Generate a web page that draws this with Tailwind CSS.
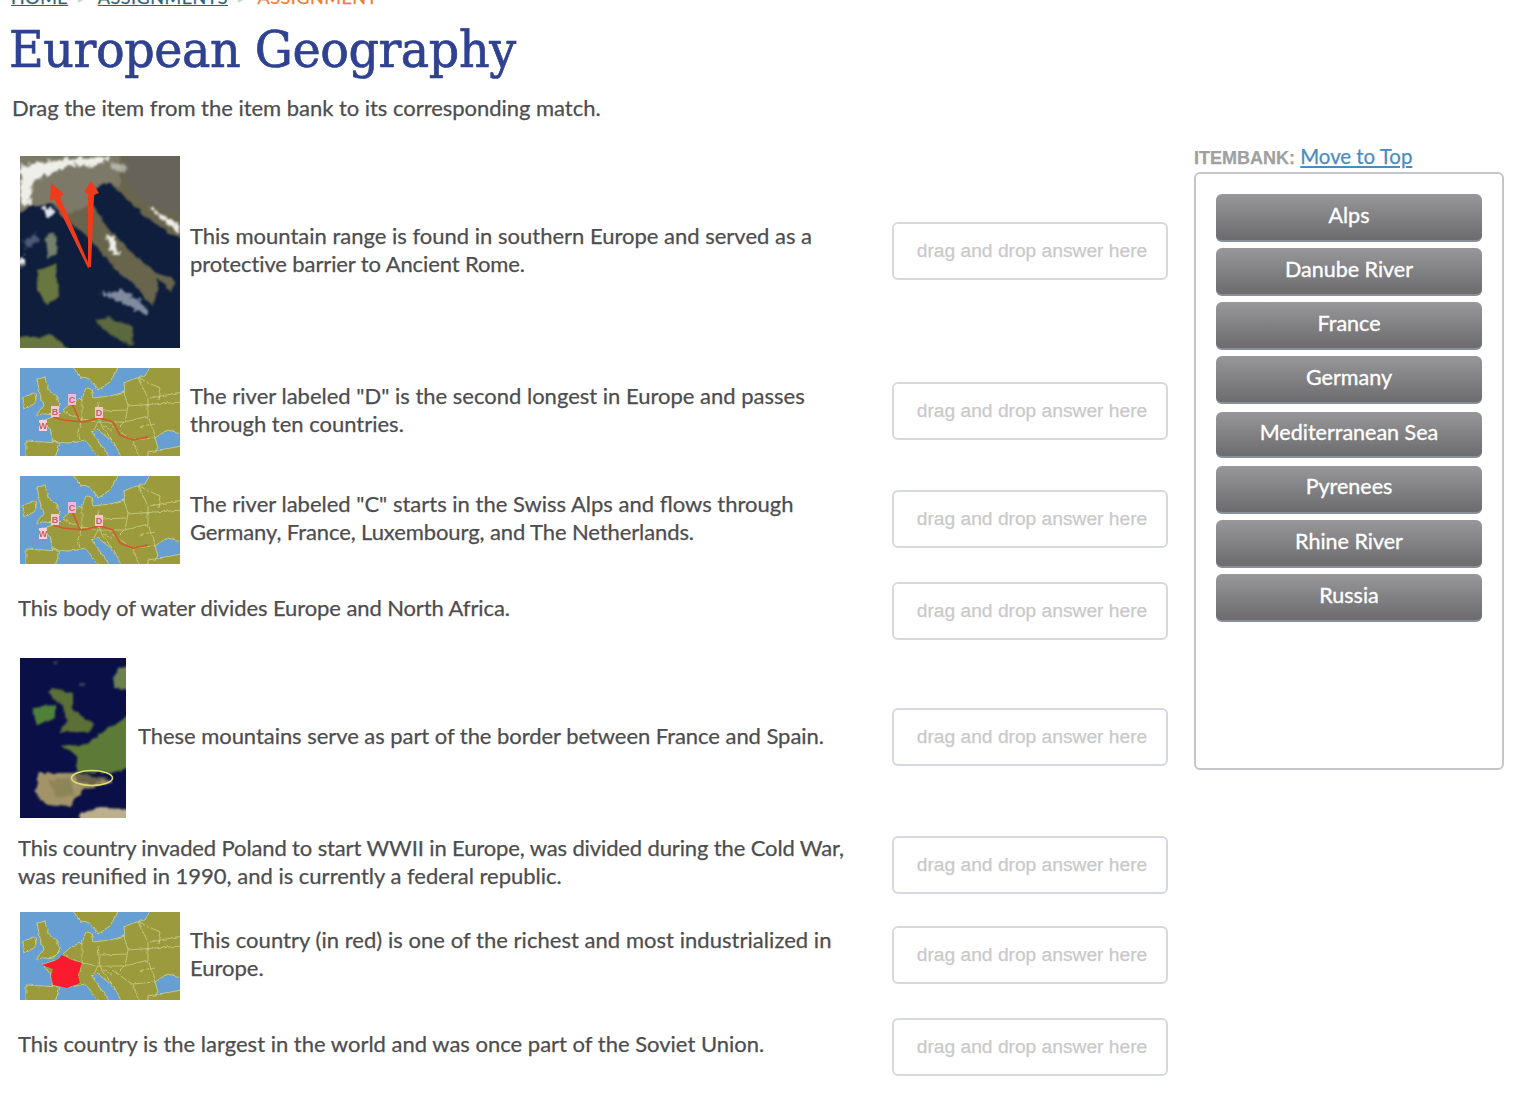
<!DOCTYPE html>
<html lang="en">
<head>
<meta charset="utf-8">
<title>European Geography</title>
<script src="https://cdn.jsdelivr.net/npm/@tailwindcss/browser@4"></script>
</head>
<body class="bg-white overflow-hidden font-['Lato',sans-serif] text-[#4d4d4f] [-webkit-text-stroke:0.25px]">
<svg class="absolute w-0 h-0" aria-hidden="true">
  <defs>
    <filter id="b1" x="-5%" y="-5%" width="110%" height="110%"><feGaussianBlur stdDeviation="0.5"/></filter>
    <filter id="b2" x="-5%" y="-5%" width="110%" height="110%"><feGaussianBlur stdDeviation="0.7"/></filter>
    <filter id="rough" x="-10%" y="-10%" width="120%" height="120%" color-interpolation-filters="sRGB">
      <feTurbulence type="fractalNoise" baseFrequency="0.09" numOctaves="3" seed="4" result="n"/>
      <feDisplacementMap in="SourceGraphic" in2="n" scale="7" xChannelSelector="R" yChannelSelector="G"/>
      <feGaussianBlur stdDeviation="1.1"/>
    </filter>
    <filter id="soft" x="-10%" y="-10%" width="120%" height="120%" color-interpolation-filters="sRGB">
      <feTurbulence type="fractalNoise" baseFrequency="0.16" numOctaves="3" seed="9" result="n"/>
      <feDisplacementMap in="SourceGraphic" in2="n" scale="3.5" xChannelSelector="R" yChannelSelector="G"/>
      <feGaussianBlur stdDeviation="0.6"/>
    </filter>
    <filter id="soft2" x="-10%" y="-10%" width="120%" height="120%" color-interpolation-filters="sRGB">
      <feTurbulence type="fractalNoise" baseFrequency="0.13" numOctaves="3" seed="6" result="n"/>
      <feDisplacementMap in="SourceGraphic" in2="n" scale="5" xChannelSelector="R" yChannelSelector="G"/>
      <feGaussianBlur stdDeviation="1"/>
    </filter>
    <filter id="cloud" x="-20%" y="-20%" width="140%" height="140%" color-interpolation-filters="sRGB">
      <feTurbulence type="fractalNoise" baseFrequency="0.22" numOctaves="3" seed="2" result="n"/>
      <feDisplacementMap in="SourceGraphic" in2="n" scale="9" xChannelSelector="R" yChannelSelector="G"/>
      <feGaussianBlur stdDeviation="1.2"/>
    </filter>
    <symbol id="europe" viewBox="0 0 160 88">
      <rect width="160" height="88" fill="#689fd2"/>
      <g filter="url(#soft)" fill="#9b9b3d" stroke="#c9cf8c" stroke-width="0.9" stroke-linejoin="round">
        <path d="M17 11L25 9L28 22L36 28L41 38L34 45L16 47L24 37L20 26Z"/>
        <path d="M2 30L15 24L16 35L4 41Z"/>
        <path d="M53 -2L98 -2L90 14L78 22L70 11L60 10Z"/>
        <path d="M22 53L30 50L38 47L42 43L52 34L62 31L66 20L71 21L73 30L90 28L105 24L104 15L113 11L125 8L130 -2L162 -2L162 65L147 62L135 70L138 80L125 90L102 90L92 73L78 62L72 64L90 90L80 90L65 72L57 74L47 75L33 73L30 60Z"/>
        <path d="M6 73L40 75L35 90L6 90Z"/>
        <path d="M128 84L162 78L162 90L128 90Z"/>
        <g fill="none" stroke-width="0.8">
          <path d="M42 43L62 51L58 63L60 71M62 31L62 51L78 54L105 54L108 38L104 24M78 34L80 54L92 73M105 54L128 48L135 70M108 38L162 34M118 10L128 30L128 48M92 58L112 72L120 90M112 72L135 70M130 30L162 24M80 43L106 42M118 10L140 20L138 32M78 54L74 62M96 62L104 54M92 62L84 58M120 60L135 56"/>
        </g>
      </g>
    </symbol>
    <symbol id="rivers" viewBox="0 0 160 88">
      <g filter="url(#b1)">
        <path d="M33 49L43 52L63 54L80 50L93 54L100 67L113 72L128 69M52 35L60 54" fill="none" stroke="#d2582e" stroke-width="1.7"/>
        <rect x="31" y="38" width="8" height="11" fill="#f5c8d0"/>
        <rect x="48" y="26" width="8" height="11" fill="#f1b9d6"/>
        <rect x="75" y="39" width="8" height="11" fill="#f5c8d0"/>
        <rect x="19" y="52" width="8" height="11" fill="#f7d3d8"/>
        <g font-family="Liberation Sans" font-size="9" font-weight="700" fill="#c26060" stroke="none" text-anchor="middle">
          <text x="35" y="47">B</text><text x="52" y="35">C</text><text x="79" y="48">D</text><text x="23" y="61">W</text>
        </g>
      </g>
    </symbol>
  </defs>
</svg>

<div class="h-[1102px] w-[1516px] overflow-hidden">
  <nav class="h-[6px] pl-[11px] overflow-visible flex items-end gap-[10px] text-[18px] leading-[18px] tracking-[0.5px]">
    <a class="text-[#2a6670] underline">HOME</a>
    <span class="text-[#c5d5dc] text-[12px]">▶</span>
    <a class="text-[#2a6670] underline">ASSIGNMENTS</a>
    <span class="text-[#c5d5dc] text-[12px]">▶</span>
    <span class="text-[#f07b33]">ASSIGNMENT</span>
  </nav>

  <h1 class="mt-[14px] ml-[9px] h-[60px] text-[51px] leading-[60px] text-[#2f4191] font-['DejaVu_Serif',serif] tracking-[-0.5px] [-webkit-text-stroke:0.7px] origin-left scale-x-[0.935] whitespace-nowrap">European Geography</h1>
  <p class="mt-[14px] ml-[12px] h-[28px] text-[22px] leading-[28px] tracking-[-0.03px]">Drag the item from the item bank to its corresponding match.</p>

  <div class="flex mt-[24px]">
    <main class="w-[1168px] shrink-0 pl-[18px] text-[22px] leading-[28px]">
      <div class="h-[212px] flex items-center">
        <svg class="ml-[2px] w-[160px] h-[192px] shrink-0" viewBox="0 0 160 192">
          <rect width="160" height="192" fill="#0e1e3c"/>
          <g filter="url(#rough)">
            <path d="M-5 -5H165V87L130 64L103 40L87 27L77 27L73 50L90 74L113 97L133 114L157 127L150 135L138 122L135 140L133 150L125 140L100 117L67 81L40 57L33 47L10 50L-5 60Z" fill="#69654d"/>
            <path d="M-5 -5H100V30L78 28L72 48L46 58L34 47L10 50L-5 60Z" fill="#7d7968"/>
            <path d="M104 -5H165V60L130 50L108 30Z" fill="#67635a"/>
            <path d="M27 80L34 76L36 98L29 102Z" fill="#75806a"/>
            <path d="M18 114L36 108L38 140L28 150L18 136Z" fill="#68763f"/>
            <path d="M74 164L90 162L114 172L112 190L92 180Z" fill="#5c683e"/>
            <path d="M-5 184L30 178L52 196H-5Z" fill="#69763f"/>
          </g>
          <g filter="url(#cloud)" fill="#efefea">
            <path d="M0 10L30 5L60 2L90 1L76 10L50 9L30 18L14 24L9 48L1 50Z"/>
            <path d="M92 6L110 10L104 16L90 12Z" opacity=".5"/>
            <path d="M128 50L160 70V78L140 62Z"/>
            <path d="M86 78L94 80L100 98L92 98Z"/>
            <path d="M22 52L33 50L34 60L26 60Z" fill="#dfe3ea"/>
            <path d="M0 100L5 100L5 108L0 110Z"/>
            <path d="M80 138L104 134L128 152L128 160L108 150Z" fill="#a7b0c2" opacity=".75"/>
            <path d="M4 84L16 78L20 86L6 92Z" fill="#7d8ba5" opacity=".55"/>
          </g>
          <g filter="url(#b1)" stroke="none" fill="#ef3b1c">
            <path d="M31 27L44 38L40 41L70 111L68 112L34 43L30 45Z"/>
            <path d="M64 36L71 25L79 37L74 39L71 111L68 111L68 38Z"/>
          </g>
        </svg>
        <p class="ml-[10px] -mt-[4px]">This mountain range is found in southern Europe and served as a<br><span class="tracking-[-0.11px]">protective barrier to Ancient Rome.</span></p>
        <div class="ml-auto -mt-[2px] w-[276px] h-[58px] pl-[4px] border-2 border-[#d6d8e0] rounded-[6px] flex items-center justify-center font-['Liberation_Sans',sans-serif] text-[19.2px] text-[#c9c9c9]">drag and drop answer here</div>
      </div>

      <div class="h-[108px] flex items-center">
        <svg class="ml-[2px] w-[160px] h-[88px] shrink-0" viewBox="0 0 160 88">
          <g filter="url(#b2)"><use href="#europe"/><use href="#rivers"/></g>
        </svg>
        <p class="ml-[10px] -mt-[4px]">The river labeled "D" is the second longest in Europe and passes<br>through ten countries.</p>
        <div class="ml-auto -mt-[2px] w-[276px] h-[58px] pl-[4px] border-2 border-[#d6d8e0] rounded-[6px] flex items-center justify-center font-['Liberation_Sans',sans-serif] text-[19.2px] text-[#c9c9c9]">drag and drop answer here</div>
      </div>

      <div class="h-[108px] flex items-center">
        <svg class="ml-[2px] w-[160px] h-[88px] shrink-0" viewBox="0 0 160 88">
          <g filter="url(#b2)"><use href="#europe"/><use href="#rivers"/></g>
        </svg>
        <p class="ml-[10px] -mt-[4px]">The river labeled "C" starts in the Swiss Alps and flows through<br><span class="tracking-[-0.1px]">Germany, France, Luxembourg, and The Netherlands.</span></p>
        <div class="ml-auto -mt-[2px] w-[276px] h-[58px] pl-[4px] border-2 border-[#d6d8e0] rounded-[6px] flex items-center justify-center font-['Liberation_Sans',sans-serif] text-[19.2px] text-[#c9c9c9]">drag and drop answer here</div>
      </div>

      <div class="h-[74px] flex items-center">
        <p class="-mt-[6px] tracking-[-0.1px]">This body of water divides Europe and North Africa.</p>
        <div class="ml-auto w-[276px] h-[58px] pl-[4px] border-2 border-[#d6d8e0] rounded-[6px] flex items-center justify-center font-['Liberation_Sans',sans-serif] text-[19.2px] text-[#c9c9c9]">drag and drop answer here</div>
      </div>

      <div class="h-[180px] flex items-center">
        <svg class="ml-[2px] w-[106px] h-[160px] shrink-0" viewBox="0 0 106 160">
          <rect width="106" height="160" fill="#0a0f48"/>
          <g filter="url(#soft2)">
            <path d="M12 49L35 47L35 60L17 69Z" fill="#4f8238"/>
            <path d="M33 30L53 35L53 52L75 67L67 74L38 74L47 62L43 49L28 34Z" fill="#5b6f36"/>
            <path d="M42 87L67 87L80 75L110 57V109L93 115L57 114L57 99Z" fill="#5d7a37"/>
            <path d="M93 20L100 10L110 9V32L95 30Z" fill="#6c8150"/>
            <path d="M18 115L57 115L93 124L63 132L50 149L27 147L15 135L18 124Z" fill="#a29468"/>
            <path d="M28 122L50 120L54 136L36 140Z" fill="#8d8458"/>
            <path d="M56 116L88 120L72 127L56 124Z" fill="#6a6448"/>
            <path d="M60 155L80 150L110 151V164H60Z" fill="#bcb08c"/>
            <path d="M34 4H38V7H34Z" fill="#3a4466"/>
            <path d="M58 24H64V28H58Z" fill="#38405f"/>
          </g>
          <ellipse cx="72" cy="120" rx="20.5" ry="7.5" fill="none" stroke="#dedc78" stroke-width="1.6"/>
        </svg>
        <p class="ml-[12px] -mt-[4px] tracking-[-0.05px]">These mountains serve as part of the border between France and Spain.</p>
        <div class="ml-auto -mt-[2px] w-[276px] h-[58px] pl-[4px] border-2 border-[#d6d8e0] rounded-[6px] flex items-center justify-center font-['Liberation_Sans',sans-serif] text-[19.2px] text-[#c9c9c9]">drag and drop answer here</div>
      </div>

      <div class="h-[74px] flex items-center">
        <p class="-mt-[6px]"><span class="tracking-[-0.13px]">This country invaded Poland to start WWII in Europe, was divided during the Cold War,</span><br>was reunified in 1990, and is currently a federal republic.</p>
        <div class="ml-auto w-[276px] h-[58px] pl-[4px] border-2 border-[#d6d8e0] rounded-[6px] flex items-center justify-center font-['Liberation_Sans',sans-serif] text-[19.2px] text-[#c9c9c9]">drag and drop answer here</div>
      </div>

      <div class="h-[108px] flex items-center">
        <svg class="ml-[2px] w-[160px] h-[88px] shrink-0" viewBox="0 0 160 88">
          <use href="#europe"/>
          <path d="M22 53L31 50L37 48L42 43L52 48L62 51L58 63L60 71L47 76L33 73L31 64L33 57Z" fill="#fa1a2e" filter="url(#b1)"/>
        </svg>
        <p class="ml-[10px] -mt-[4px]"><span class="tracking-[0.04px]">This country (in red) is one of the richest and most industrialized in</span><br>Europe.</p>
        <div class="ml-auto -mt-[2px] w-[276px] h-[58px] pl-[4px] border-2 border-[#d6d8e0] rounded-[6px] flex items-center justify-center font-['Liberation_Sans',sans-serif] text-[19.2px] text-[#c9c9c9]">drag and drop answer here</div>
      </div>

      <div class="h-[74px] flex items-center">
        <p class="-mt-[6px]">This country is the largest in the world and was once part of the Soviet Union.</p>
        <div class="ml-auto w-[276px] h-[58px] pl-[4px] border-2 border-[#d6d8e0] rounded-[6px] flex items-center justify-center font-['Liberation_Sans',sans-serif] text-[19.2px] text-[#c9c9c9]">drag and drop answer here</div>
      </div>
    </main>

    <aside class="ml-[26px] w-[310px] shrink-0">
      <div class="h-[26px] text-[20.4px] leading-[20px] whitespace-nowrap"><b class="font-['Liberation_Sans',sans-serif] text-[18px] text-[#a0a0a0]">ITEMBANK:</b> <a class="text-[#4a8cbe] underline">Move to Top</a></div>
      <div class="h-[598px] border-2 border-[#c4c6ca] rounded-[6px] px-[20px] pt-[20px] flex flex-col gap-[6px] text-[21.5px] [-webkit-text-stroke:0.35px]">
        <div class="h-[48px] shrink-0 pb-[3px] rounded-[6px] border-b-2 border-[#8b8f9b] bg-gradient-to-b from-[#98989b] to-[#6c6c6e] text-white flex items-center justify-center">Alps</div>
        <div class="h-[48px] shrink-0 pb-[3px] rounded-[6px] border-b-2 border-[#8b8f9b] bg-gradient-to-b from-[#98989b] to-[#6c6c6e] text-white flex items-center justify-center">Danube River</div>
        <div class="h-[48px] shrink-0 pb-[3px] rounded-[6px] border-b-2 border-[#8b8f9b] bg-gradient-to-b from-[#98989b] to-[#6c6c6e] text-white flex items-center justify-center">France</div>
        <div class="h-[48px] shrink-0 pb-[3px] rounded-[6px] border-b-2 border-[#8b8f9b] bg-gradient-to-b from-[#98989b] to-[#6c6c6e] text-white flex items-center justify-center">Germany</div>
        <div class="h-[46px] mt-[2px] shrink-0 pb-[4px] rounded-[6px] border-b-2 border-[#8b8f9b] bg-gradient-to-b from-[#98989b] to-[#6c6c6e] text-white flex items-center justify-center">Mediterranean Sea</div>
        <div class="h-[48px] mt-[2px] shrink-0 pb-[5px] rounded-[6px] border-b-2 border-[#8b8f9b] bg-gradient-to-b from-[#98989b] to-[#6c6c6e] text-white flex items-center justify-center">Pyrenees</div>
        <div class="h-[48px] shrink-0 pb-[3px] rounded-[6px] border-b-2 border-[#8b8f9b] bg-gradient-to-b from-[#98989b] to-[#6c6c6e] text-white flex items-center justify-center">Rhine River</div>
        <div class="h-[48px] shrink-0 pb-[3px] rounded-[6px] border-b-2 border-[#8b8f9b] bg-gradient-to-b from-[#98989b] to-[#6c6c6e] text-white flex items-center justify-center">Russia</div>
      </div>
    </aside>
  </div>
</div>
</body>
</html>
